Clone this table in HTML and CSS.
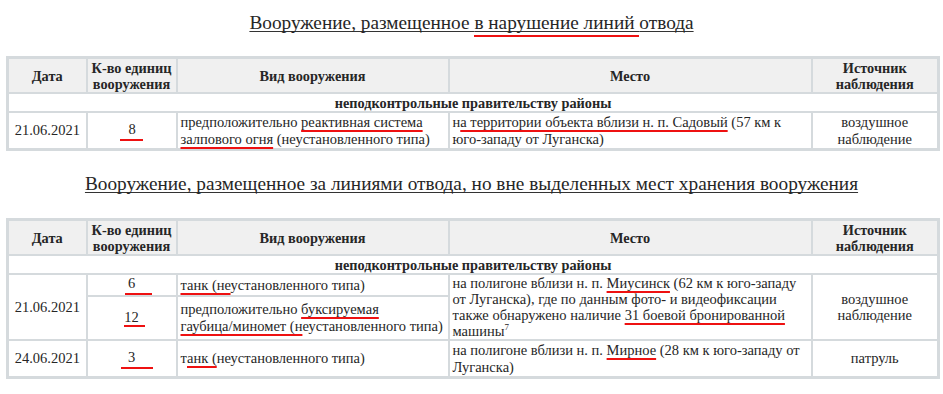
FILE: index.html
```html
<!DOCTYPE html>
<html lang="ru">
<head>
<meta charset="utf-8">
<link rel="stylesheet" href="styles.css">
</head>
<body>
<div class="page">
  <h2 class="title title-1"><span class="ul">Вооружение, размещенное <span class="red">в нарушение линий </span>отвода</span></h2>
  <table class="report">
    <colgroup>
      <col class="c-date"><col class="c-qty"><col class="c-kind"><col class="c-place"><col class="c-src">
    </colgroup>
    <thead>
      <tr><th>Дата</th><th>К-во единиц вооружения</th><th>Вид вооружения</th><th>Место</th><th>Источник наблюдения</th></tr>
    </thead>
    <tbody>
      <tr class="group"><td colspan="5">неподконтрольные правительству районы</td></tr>
      <tr class="r-data">
        <td class="center">21.06.2021</td>
        <td class="center"><span class="num n8">8</span></td>
        <td>предположительно <span class="mk">реактивная система</span> <span class="mk">залпового огня</span> (неустановленного типа)</td>
        <td>н<span class="mk">а территории объекта вблизи н. п. Садовый</span> (57 км к юго-западу от Луганска)</td>
        <td class="center">воздушное наблюдение</td>
      </tr>
    </tbody>
  </table>

  <h2 class="title title-2"><span class="ul">Вооружение, размещенное за линиями отвода, но вне выделенных мест хранения вооружения</span></h2>
  <table class="report">
    <colgroup>
      <col class="c-date"><col class="c-qty"><col class="c-kind"><col class="c-place"><col class="c-src">
    </colgroup>
    <thead>
      <tr><th>Дата</th><th>К-во единиц вооружения</th><th>Вид вооружения</th><th>Место</th><th>Источник наблюдения</th></tr>
    </thead>
    <tbody>
      <tr class="group"><td colspan="5">неподконтрольные правительству районы</td></tr>
      <tr class="r-short">
        <td class="center" rowspan="2">21.06.2021</td>
        <td class="center"><span class="num n6">6</span></td>
        <td><span class="mk">танк (не</span>установленного типа)</td>
        <td rowspan="2" class="place4">на полигоне вблизи н. п. <span class="mk">Миусинск</span> (62 км к юго-западу от Луганска), где по данным фото- и видеофиксации также обнаружено наличие <span class="mk">31 боевой бронированной</span> машины<sup>7</sup></td>
        <td class="center" rowspan="2">воздушное наблюдение</td>
      </tr>
      <tr>
        <td class="center"><span class="num n12">12</span></td>
        <td>предположительно <span class="mk">буксируемая</span> <span class="mk nowrap">гаубица/миномет (н</span>еустановленного типа)</td>
      </tr>
      <tr class="r-data">
        <td class="center">24.06.2021</td>
        <td class="center"><span class="num n3">3</span></td>
        <td>т<span class="mk">анк (</span>неустановленного типа)</td>
        <td>на полигоне вблизи н. п. <span class="mk">Мирное</span> (28 км к юго-западу от Луганска)</td>
        <td class="center">патруль</td>
      </tr>
    </tbody>
  </table>
</div>
</body>
</html>
```

FILE: styles.css
```css
html, body {
  margin: 0;
  padding: 0;
  background: #ffffff;
}

.page {
  padding: 0 6px;
  font-family: "Liberation Serif", "Times New Roman", serif;
  color: #262626;
}

.title {
  margin: 0;
  font-weight: normal;
  font-size: 19.3px;
  line-height: 22px;
  text-align: center;
  color: #262626;
  box-sizing: border-box;
}

.title-1 {
  padding-top: 12px;
  height: 56px;
}

.title-2 {
  padding-top: 22px;
  height: 67px;
}

.title .ul {
  text-decoration: underline;
  text-decoration-color: #333333;
  text-decoration-skip-ink: none;
  text-underline-offset: 2px;
}

.title .red {
  border-bottom: 2px solid #ee1111;
  padding-bottom: 2px;
}

.report {
  width: 100%;
  table-layout: fixed;
  border-collapse: collapse;
  border: 3px solid #d5dadd;
  font-size: 14.5px;
  line-height: 17px;
}

.c-date { width: 79px; }
.c-qty { width: 90px; }
.c-kind { width: 272px; }
.c-place { width: 363px; }
.c-src { width: 127px; }

.report th,
.report td {
  border: 2px solid #d5dadd;
  padding: 0 3px;
  vertical-align: middle;
}

.report th {
  background: #f0f0f0;
  font-weight: bold;
  font-size: 14.3px;
  line-height: 16px;
  height: 33px;
  color: #262626;
}

.report .group td {
  text-align: center;
  font-weight: bold;
  font-size: 14.3px;
  line-height: 16px;
  height: 17px;
  padding: 0;
}

.report td.center {
  text-align: center;
}

.report tr.r-data td { height: 35px; }
.report tr.r-short td { height: 17px; line-height: 16px; }
.report td.place4 { line-height: 17px; }

.nowrap { white-space: nowrap; }

.mk {
  text-decoration: underline;
  text-decoration-color: #ee1111;
  text-decoration-thickness: 2px;
  text-decoration-skip-ink: none;
  text-underline-offset: 3px;
}

.num {
  display: inline-block;
  line-height: 15px;
  padding-bottom: 2px;
  border-bottom: 2px solid #ee1111;
}

.n8 { padding-left: 8px; padding-right: 7px; }
.n6 { padding-left: 3px; padding-right: 17px; margin-left: 14px; }
.n12 { padding-left: 0; padding-right: 6px; margin-left: 6px; padding-bottom: 0; }
.n3 { padding-left: 7px; padding-right: 18px; margin-left: 11px; }

sup {
  font-size: 9px;
  line-height: 0;
}
```
